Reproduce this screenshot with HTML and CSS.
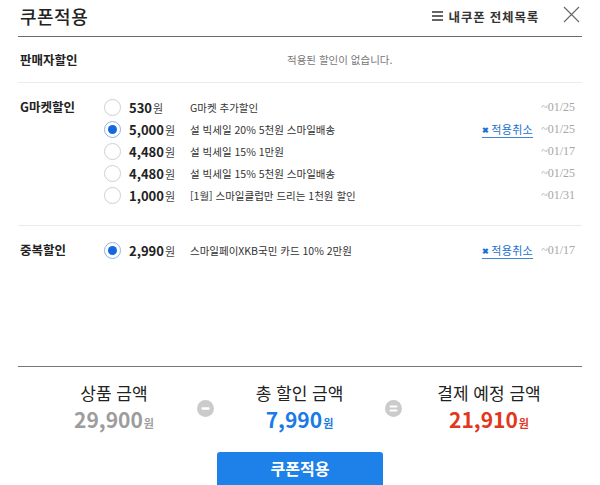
FILE: index.html
```html
<!DOCTYPE html>
<html lang="ko">
<head>
    <meta charset="utf-8">
    <title>쿠폰적용</title>
    <link rel="stylesheet" href="styles.css">
</head>
<body>
    <div class="popup">
        <div class="head">
            <h1 class="title">쿠폰적용</h1>
            <a class="my-coupon">
                <svg width="11" height="10" viewBox="0 0 11 10"><path d="M0 1h11M0 5h11M0 9h11" stroke="#333" stroke-width="1.6"/></svg>
                내쿠폰 전체목록
            </a>
            <svg class="close" width="17" height="17" viewBox="0 0 17 17"><path d="M1 1L16 16M16 1L1 16" stroke="#666" stroke-width="1.1"/></svg>
        </div>

        <!-- 판매자할인 -->
        <div class="sec seller">
            <div class="sec-label">판매자할인</div>
            <div class="empty">적용된 할인이 없습니다.</div>
        </div>

        <!-- G마켓할인 -->
        <div class="sec">
            <div class="sec-label">G마켓할인</div>
            <ul class="rows">
                <li class="row">
                    <span class="radio"></span>
                    <span class="amt">530<em>원</em></span>
                    <span class="desc">G마켓 추가할인</span>
                    <span class="date">~01/25</span>
                </li>
                <li class="row">
                    <span class="radio on"></span>
                    <span class="amt">5,000<em>원</em></span>
                    <span class="desc">설 빅세일 20% 5천원 스마일배송</span>
                    <a class="cancel"><b>✖</b>적용취소</a>
                    <span class="date">~01/25</span>
                </li>
                <li class="row">
                    <span class="radio"></span>
                    <span class="amt">4,480<em>원</em></span>
                    <span class="desc">설 빅세일 15% 1만원</span>
                    <span class="date">~01/17</span>
                </li>
                <li class="row">
                    <span class="radio"></span>
                    <span class="amt">4,480<em>원</em></span>
                    <span class="desc">설 빅세일 15% 5천원 스마일배송</span>
                    <span class="date">~01/25</span>
                </li>
                <li class="row">
                    <span class="radio"></span>
                    <span class="amt">1,000<em>원</em></span>
                    <span class="desc">[1월] 스마일클럽만 드리는 1천원 할인</span>
                    <span class="date">~01/31</span>
                </li>
            </ul>
        </div>

        <!-- 중복할인 -->
        <div class="sec dup">
            <div class="sec-label">중복할인</div>
            <ul class="rows">
                <li class="row">
                    <span class="radio on"></span>
                    <span class="amt">2,990<em>원</em></span>
                    <span class="desc">스마일페이XKB국민 카드 10% 2만원</span>
                    <a class="cancel"><b>✖</b>적용취소</a>
                    <span class="date">~01/17</span>
                </li>
            </ul>
        </div>

        <div class="summary">
            <div class="sum-col">
                <div class="sum-label">상품 금액</div>
                <div class="sum-price gray">29,900<em>원</em></div>
            </div>
            <span class="op">
                <svg width="17" height="17" viewBox="0 0 17 17"><circle cx="8.5" cy="8.5" r="8.5" fill="#cbcbcb"/><rect x="4.5" y="7.3" width="8" height="2.4" rx="1" fill="#fff"/></svg>
            </span>
            <div class="sum-col">
                <div class="sum-label">총 할인 금액</div>
                <div class="sum-price blue">7,990<em>원</em></div>
            </div>
            <span class="op">
                <svg width="17" height="17" viewBox="0 0 17 17"><circle cx="8.5" cy="8.5" r="8.5" fill="#cbcbcb"/><rect x="4.5" y="5.6" width="8" height="2" rx="1" fill="#fff"/><rect x="4.5" y="9.4" width="8" height="2" rx="1" fill="#fff"/></svg>
            </span>
            <div class="sum-col">
                <div class="sum-label">결제 예정 금액</div>
                <div class="sum-price red">21,910<em>원</em></div>
            </div>
        </div>

        <button class="apply">쿠폰적용</button>
    </div>
</body>
</html>
```

FILE: styles.css
```css
body {
    margin: 0;
    background-color: #fff;
    font-family: "Noto Sans CJK KR", "Noto Sans", sans-serif;
    color: #222;
}
ul {
    margin: 0;
    padding: 0;
    list-style: none;
}
.popup {
    padding: 0 18px;
    overflow: hidden;
    height: 485px;
}
.head {
    display: flex;
    align-items: center;
    height: 36px;
    padding: 0 2px;
    border-bottom: 1px solid #6b6b6b;
}
.title {
    margin: 0;
    font-size: 18px;
    font-weight: 500;
    letter-spacing: 0.5px;
    flex: 1;
    margin-top: -4px;
}
.my-coupon {
    display: flex;
    align-items: center;
    gap: 6px;
    font-size: 12.5px;
    font-weight: 700;
    color: #333;
    letter-spacing: 0.8px;
    margin-top: -4px;
}
.close {
    margin-left: 24px;
    margin-top: -8px;
}
.sec {
    display: flex;
    align-items: flex-start;
    padding: 13px 7px 19px 2px;
    border-bottom: 1px solid #ebebeb;
}
.sec-label {
    width: 84px;
    flex: none;
    font-size: 12.5px;
    font-weight: 700;
    line-height: 22px;
    color: #222;
}
.seller {
    align-items: center;
    height: 46px;
    padding: 0 7px 0 2px;
    box-sizing: border-box;
}
.empty {
    margin-left: 183px;
    font-size: 10.5px;
    color: #777;
}
.dup {
    padding-bottom: 105px;
    border-bottom: 1px solid #777;
}
.rows {
    flex: 1;
}
.row {
    display: flex;
    align-items: center;
    height: 22px;
}
.radio {
    width: 15px;
    height: 15px;
    border: 1px solid #cfcfcf;
    border-radius: 50%;
    box-sizing: content-box;
    flex: none;
    position: relative;
    background-color: #fff;
}
.radio.on {
    border-color: #8db5e6;
}
.radio.on::after {
    content: "";
    position: absolute;
    left: 3px;
    top: 3px;
    width: 9px;
    height: 9px;
    border-radius: 50%;
    background-color: #1467e0;
}
.amt {
    width: 61px;
    margin-left: 8px;
    font-size: 13px;
    font-weight: 700;
    color: #222;
    flex: none;
}
.amt em {
    font-style: normal;
    font-weight: 400;
    font-size: 11px;
    color: #444;
    margin-left: 1px;
}
.desc {
    flex: 1;
    font-size: 10.5px;
    color: #333;
}
.cancel {
    font-size: 11px;
    color: #1a6fd0;
    border-bottom: 1px solid #3d86d8;
    line-height: 14px;
    margin-top: 2px;
    letter-spacing: 0.3px;
}
.cancel b {
    font-size: 8px;
    margin-right: 2px;
    vertical-align: 1px;
}
.date {
    width: 35px;
    margin-left: 7px;
    font-family: "Liberation Serif", serif;
    font-size: 12px;
    color: #a6a6a6;
    text-align: right;
}
.summary {
    display: grid;
    grid-template-columns: 166px 17px 171px 17px 174px;
    align-items: center;
    padding: 15px 0 0 13px;
}
.sum-col {
    text-align: center;
}
.sum-label {
    font-size: 17px;
    line-height: 22px;
    color: #222;
}
.sum-price {
    font-size: 21px;
    font-weight: 700;
    line-height: 28px;
    margin-top: 1px;
}
.sum-price em {
    font-style: normal;
    font-size: 11px;
    margin-left: 1px;
}
.gray {
    color: #9d9d9d;
}
.blue {
    color: #1a7be6;
}
.red {
    color: #e0371d;
}
.op {
    display: flex;
    margin-top: -2px;
}
.apply {
    display: block;
    width: 166px;
    height: 34px;
    margin: 15px auto 0;
    border: 0;
    border-radius: 3px 3px 0 0;
    background-color: #1e80e9;
    color: #fff;
    font-family: "Noto Sans CJK KR", sans-serif;
    font-size: 16px;
    font-weight: 700;
    padding: 0 0 2px;
}
```
